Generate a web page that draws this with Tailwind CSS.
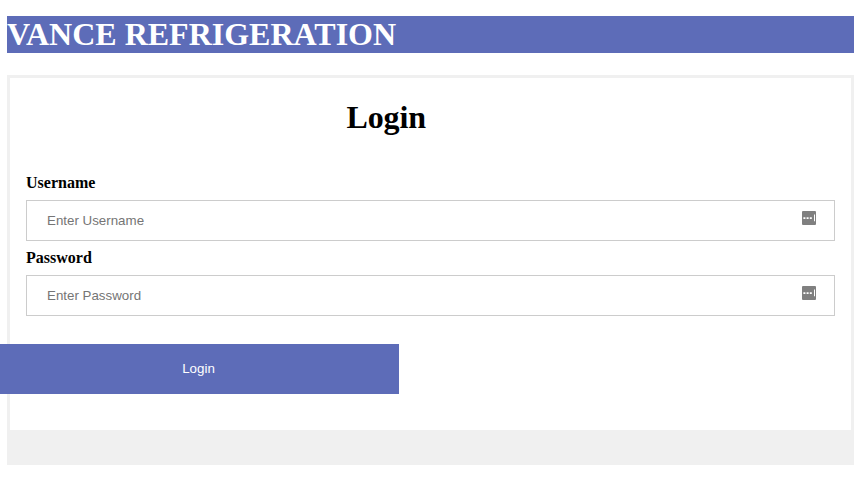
<!DOCTYPE html>
<html lang="en">
<head>
<meta charset="utf-8">
<title>Vance Refrigeration</title>
<script src="https://cdn.jsdelivr.net/npm/@tailwindcss/browser@4"></script>
</head>
<body class="bg-white overflow-hidden text-black font-['Liberation_Serif',serif]">
<div class="ml-[7px] w-[847px] pt-4">
  <h1 class="h-[37px] bg-[#5d6cb8] text-white text-[32px] leading-[37px] font-bold whitespace-nowrap">VANCE REFRIGERATION</h1>
  <form class="mt-[22px] h-[390px] border-[3px] border-[#f0f0f0] flex flex-col">
    <div class="h-[352px] px-4 pt-[21px]">
      <h1 class="ml-[320.5px] text-[32px] leading-[37px] tracking-[-0.15px] font-bold">Login</h1>
      <label for="user" class="block mt-[38px] h-[18px] text-base leading-[18px] font-bold">Username</label>
      <div class="mt-2 h-[41px] w-[809px] border border-[#ccc] flex items-start pr-[18px]">
        <input id="user" type="text" placeholder="Enter Username" class="h-[39px] flex-1 pl-5 text-[13.333px] font-['Liberation_Sans',sans-serif] placeholder:text-[#757575] outline-none">
        <svg class="mt-[10px] w-[14px] h-[14px]" viewBox="0 0 14 14"><rect width="14" height="14" rx="1" fill="#808080"/><path d="M1.4 6.2h2v1.8h-2zM4.6 6.2h2v1.8h-2zM7.8 6.2h2v1.8h-2z" fill="#fff"/><path d="M12 3.6h1v6.6h-1z" fill="#fff"/></svg>
      </div>
      <label for="pass" class="block mt-2 h-[18px] text-base leading-[18px] font-bold">Password</label>
      <div class="mt-2 h-[41px] w-[809px] border border-[#ccc] flex items-start pr-[18px]">
        <input id="pass" type="password" placeholder="Enter Password" class="h-[39px] flex-1 pl-5 text-[13.333px] font-['Liberation_Sans',sans-serif] placeholder:text-[#757575] outline-none">
        <svg class="mt-[10px] w-[14px] h-[14px]" viewBox="0 0 14 14"><rect width="14" height="14" rx="1" fill="#808080"/><path d="M1.4 6.2h2v1.8h-2zM4.6 6.2h2v1.8h-2zM7.8 6.2h2v1.8h-2z" fill="#fff"/><path d="M12 3.6h1v6.6h-1z" fill="#fff"/></svg>
      </div>
      <button type="button" class="block mt-7 -ml-[28px] w-[401px] h-[50px] bg-[#5d6cb8] text-white text-[13.333px] font-['Liberation_Sans',sans-serif]">Login</button>
    </div>
    <div class="flex-1 bg-[#f0f0f0]"></div>
  </form>
</div>
</body>
</html>
